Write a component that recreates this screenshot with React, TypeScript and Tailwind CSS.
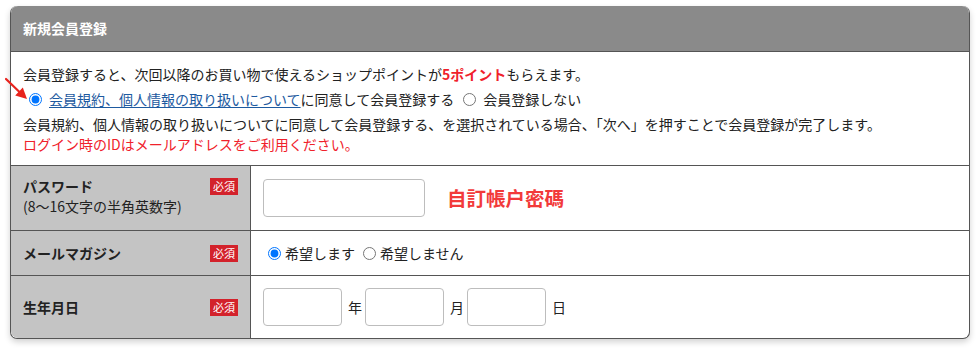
import React, { useState } from 'react';

const Badge = () => (
  <span className="flex h-[17px] w-[28px] shrink-0 items-center justify-center bg-[#d3222b] text-[11px] leading-none text-white">
    必須
  </span>
);

export default function App() {
  const [agree, setAgree] = useState('yes');
  const [mail, setMail] = useState('yes');

  return (
    <div className="min-h-[349px] bg-white pt-[6px] pl-[10px] font-['Noto_Sans_CJK_JP',sans-serif] text-[#222]">
      <div className="relative w-[960px] rounded-[7px] border-x border-b border-[#555] bg-white shadow-[0_3px_6px_rgba(0,0,0,0.18)]">
        {/* Header */}
        <div className="flex h-[46px] items-center rounded-t-[7px] border-b border-[#555] bg-[#8a8a8a] px-[12px] text-[14px] font-bold text-white">
          新規会員登録
        </div>

        {/* Notice */}
        <div className="relative px-[12px] pt-[12px] pb-[11px] text-[14px] leading-[20px]">
          <svg className="absolute left-[-6px] top-[22px]" width="32" height="30" viewBox="0 0 32 30">
            <line x1="1" y1="5" x2="15" y2="18.5" stroke="#e8231d" strokeWidth="2.2" strokeLinecap="round" />
            <polygon points="22,25 10.2,21.5 17.8,13.5" fill="#e8231d" />
          </svg>
          <p>
            会員登録すると、次回以降のお買い物で使えるショップポイントが
            <span className="font-bold text-[#f0212b]">5ポイント</span>もらえます。
          </p>
          <div className="my-[5px] flex items-center">
            <input
              type="radio"
              checked={agree === 'yes'}
              onChange={() => setAgree('yes')}
              className="m-0 ml-[6px] mr-[7px] h-[13px] w-[13px]"
            />
            <a href="#" className="text-[#1d5aa0] underline underline-offset-2">
              会員規約、個人情報の取り扱いについて
            </a>
            <span>に同意して会員登録する</span>
            <input
              type="radio"
              checked={agree === 'no'}
              onChange={() => setAgree('no')}
              className="m-0 ml-[9px] mr-[7px] h-[13px] w-[13px]"
            />
            <span>会員登録しない</span>
          </div>
          <p>会員規約、個人情報の取り扱いについてに同意して会員登録する、を選択されている場合、「次へ」を押すことで会員登録が完了します。</p>
          <p className="text-[#f0212b]">ログイン時のIDはメールアドレスをご利用ください。</p>
        </div>

        {/* Password */}
        <div className="flex border-t border-[#555]">
          <div className="flex w-[240px] items-start justify-between border-r border-[#555] bg-[#c4c4c4] px-[12px] pt-[10px] text-[14px] leading-[20px]">
            <div>
              <div className="font-bold">パスワード</div>
              <div>(8〜16文字の半角英数字)</div>
            </div>
            <div className="pt-[2px]">
              <Badge />
            </div>
          </div>
          <div className="flex h-[64px] flex-1 items-center pl-[12px]">
            <input type="password" className="h-[38px] w-[162px] rounded-[4px] border border-[#bdbdbd] bg-white" />
            <span className="ml-[22px] text-[19.5px] font-bold text-[#f23a3a]">自訂帳户密碼</span>
          </div>
        </div>

        {/* Mail magazine */}
        <div className="flex border-t border-[#555]">
          <div className="flex w-[240px] items-center justify-between border-r border-[#555] bg-[#c4c4c4] px-[12px] text-[14px]">
            <span className="font-bold">メールマガジン</span>
            <Badge />
          </div>
          <div className="flex h-[44px] flex-1 items-center pl-[17px] text-[14px]">
            <input
              type="radio"
              checked={mail === 'yes'}
              onChange={() => setMail('yes')}
              className="m-0 mr-[4px] h-[13px] w-[13px]"
            />
            <span>希望します</span>
            <input
              type="radio"
              checked={mail === 'no'}
              onChange={() => setMail('no')}
              className="m-0 ml-[8px] mr-[4px] h-[13px] w-[13px]"
            />
            <span>希望しません</span>
          </div>
        </div>

        {/* Birthday */}
        <div className="flex border-t border-[#555]">
          <div className="flex w-[240px] items-center justify-between rounded-bl-[7px] border-r border-[#555] bg-[#c4c4c4] px-[12px] text-[14px]">
            <span className="font-bold">生年月日</span>
            <Badge />
          </div>
          <div className="flex h-[62px] flex-1 items-center pl-[12px] text-[14px]">
            <input type="text" className="h-[38px] w-[79px] rounded-[4px] border border-[#bdbdbd] bg-white" />
            <span className="ml-[6px] mr-[3px]">年</span>
            <input type="text" className="h-[38px] w-[79px] rounded-[4px] border border-[#bdbdbd] bg-white" />
            <span className="ml-[6px] mr-[3px]">月</span>
            <input type="text" className="h-[38px] w-[79px] rounded-[4px] border border-[#bdbdbd] bg-white" />
            <span className="ml-[6px]">日</span>
          </div>
        </div>
      </div>
    </div>
  );
}
